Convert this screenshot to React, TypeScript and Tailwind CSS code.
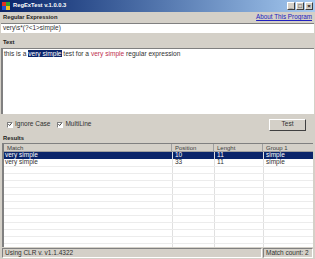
const ROWS = [
  { match: "very simple", pos: "10", len: "11", g1: "simple", selected: true },
  { match: "very simple", pos: "33", len: "11", g1: "simple", selected: false },
];

const COLS = "grid grid-cols-[168px_42px_49px_51px]";

function Check({ label }: { label: string }) {
  return (
    <div className="flex items-center gap-[2px]">
      <span className="flex h-[6px] w-[6px] items-center justify-center border border-t-[#808080] border-l-[#808080] border-b-white border-r-white bg-white">
        <svg width="5" height="5" viewBox="0 0 5 5">
          <path d="M0.5 2.2 L2 3.7 L4.5 0.8" fill="none" stroke="#000" strokeWidth="1" />
        </svg>
      </span>
      <span className="text-[6.5px] text-[#303030]">{label}</span>
    </div>
  );
}

export default function App() {
  const filler = Array.from({ length: 12 });
  return (
    <div className="flex h-[259px] w-[315px] flex-col overflow-hidden bg-[#d4d0c8] font-['Liberation_Sans',Arial,sans-serif] leading-none">
      {/* title bar */}
      <div className="flex h-[12px] items-center bg-gradient-to-r from-[#0a246a] to-[#a6caf0] px-[2px]">
        <svg width="8" height="8" viewBox="0 0 8 8">
          <rect x="0" y="0" width="4" height="4" fill="#e03020" />
          <rect x="4" y="0" width="4" height="4" fill="#30a030" />
          <rect x="0" y="4" width="4" height="4" fill="#2050d0" />
          <rect x="4" y="4" width="4" height="4" fill="#f0c020" />
        </svg>
        <span className="ml-[3px] text-[5.8px] font-bold text-white">RegExTest v.1.0.0.3</span>
        <div className="ml-auto flex gap-[1px]">
          {["_", "□", "×"].map((c) => (
            <span
              key={c}
              className="flex h-[8px] w-[8px] items-center justify-center border border-t-white border-l-white border-b-[#404040] border-r-[#404040] bg-[#d4d0c8] text-[6px] font-bold text-black"
            >
              {c}
            </span>
          ))}
        </div>
      </div>

      {/* regex label */}
      <div className="flex h-[11px] items-center px-[3px]">
        <span className="text-[5.8px] font-bold text-[#202020]">Regular Expression</span>
        <span className="ml-auto text-[6.3px] text-[#2020c0] underline">About This Program</span>
      </div>
      <div className="mx-[1px] flex h-[10px] items-center border-t border-t-[#808080] bg-white px-[2px] text-[6.5px] text-[#303030]">
        very\s*(?&lt;1&gt;simple)
      </div>

      {/* text */}
      <div className="flex h-[15px] items-end px-[3px] pb-[2px]">
        <span className="text-[5.8px] font-bold text-[#202020]">Text</span>
      </div>
      <div className="mx-[1px] h-[66px] border-l-2 border-t border-l-[#808080] border-t-[#808080] bg-white px-[1px] pt-[2px] text-[6.6px] text-[#303030]">
        this is a <span className="bg-[#0a246a] text-white">very simple</span> test for a{" "}
        <span className="text-[#c03050]">very simple</span> regular expression
      </div>

      {/* options */}
      <div className="flex h-[21px] items-center pl-[7px] pr-[9px]">
        <Check label="Ignore Case" />
        <div className="ml-[7px]">
          <Check label="MultiLine" />
        </div>
        <button className="ml-auto flex h-[12px] w-[37px] items-center justify-center border border-t-white border-l-white border-b-[#404040] border-r-[#404040] bg-[#d4d0c8] text-[6.5px] text-[#303030]">
          Test
        </button>
      </div>

      <div className="flex h-[8px] items-center px-[3px]">
        <span className="text-[5.8px] font-bold text-[#202020]">Results</span>
      </div>

      {/* results table */}
      <div className="mx-[2px] flex h-[104px] flex-col overflow-hidden border-l-2 border-t border-l-[#808080] border-t-[#808080] bg-white">
        <div className={`${COLS} h-[8px] shrink-0 text-[6px] text-[#404040]`}>
          {["Match", "Position", "Lenght", "Group 1"].map((h) => (
            <div
              key={h}
              className="flex items-center border-b border-r border-b-[#a0a0a0] border-r-[#a0a0a0] bg-[#d4d0c8] px-[3px]"
            >
              {h}
            </div>
          ))}
        </div>
        {ROWS.map((r, i) => (
          <div
            key={i}
            className={`${COLS} h-[7px] shrink-0 text-[6.5px] ${r.selected ? "bg-[#0a246a] text-white" : "text-[#303030]"}`}
          >
            <div className="flex items-center px-[1px]">{r.match}</div>
            <div className="flex items-center border-l border-l-[#e0e0e0] px-[2px]">{r.pos}</div>
            <div className="flex items-center border-l border-l-[#e0e0e0] px-[2px]">{r.len}</div>
            <div className="flex items-center border-l border-l-[#e0e0e0] px-[2px]">{r.g1}</div>
          </div>
        ))}
        {filler.map((_, i) => (
          <div key={i} className={`${COLS} h-[7px] shrink-0 border-t border-t-[#ececec]`}>
            <div />
            <div className="border-l border-l-[#e0e0e0]" />
            <div className="border-l border-l-[#e0e0e0]" />
            <div className="border-l border-l-[#e0e0e0]" />
          </div>
        ))}
      </div>

      {/* status bar */}
      <div className="mx-[2px] mt-[1px] flex h-[10px] gap-[1px]">
        <div className="flex w-[260px] items-center border border-t-[#808080] border-l-[#808080] border-b-white border-r-white px-[2px] text-[6.5px] text-[#303030]">
          Using CLR v. v1.1.4322
        </div>
        <div className="flex flex-1 items-center border border-t-[#808080] border-l-[#808080] border-b-white border-r-white px-[2px] text-[6.5px] text-[#303030]">
          Match count: 2
        </div>
      </div>
    </div>
  );
}
